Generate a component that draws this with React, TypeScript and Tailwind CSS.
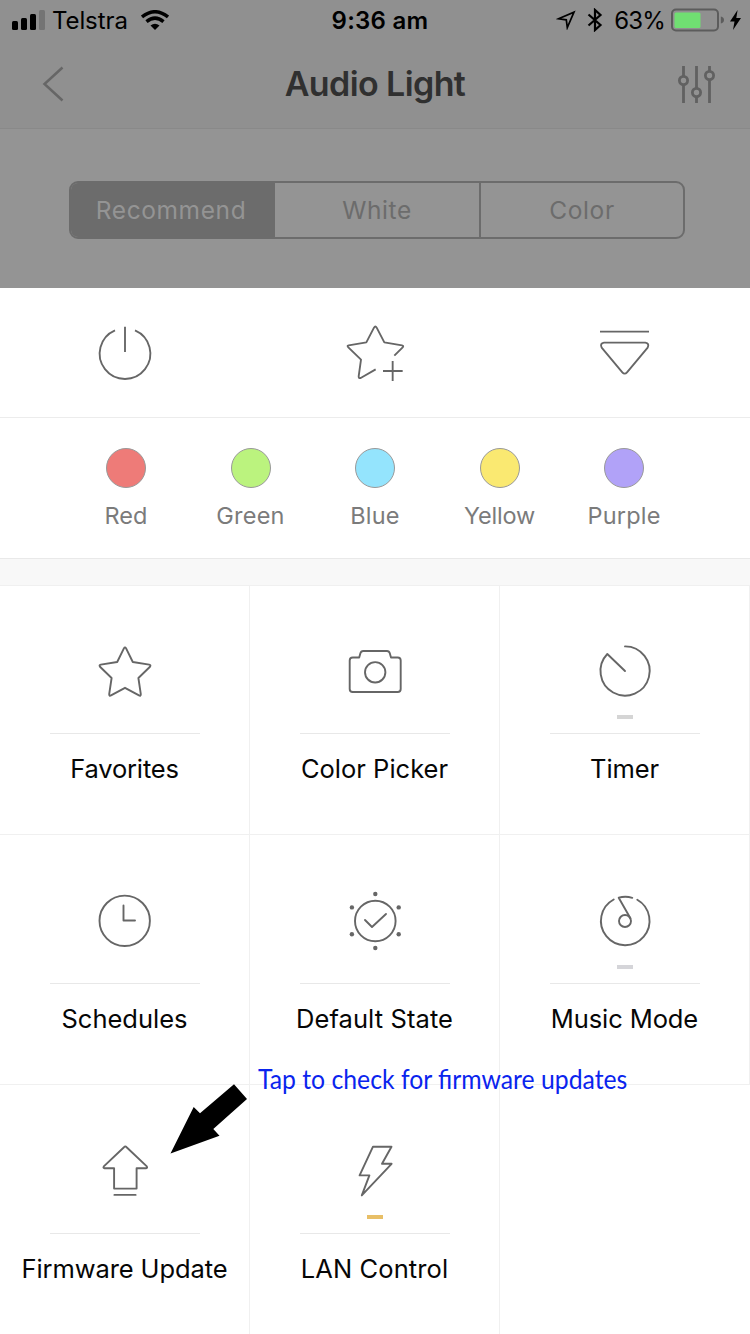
import type { ReactNode } from "react";

const colors = [
  { name: "Red", swatch: "bg-[#ee7b78]", text: "tracking-[0.1px]" },
  { name: "Green", swatch: "bg-[#bbf37e]", text: "tracking-[0.2px]" },
  { name: "Blue", swatch: "bg-[#94e4fd]", text: "tracking-[0.2px]" },
  { name: "Yellow", swatch: "bg-[#fae971]", text: "tracking-[-0.2px]" },
  { name: "Purple", swatch: "bg-[#b1a2f8]", text: "tracking-[0.2px]" },
];

function Glyph({ children }: { children: ReactNode }) {
  return (
    <svg className="h-16 w-16" viewBox="-32 -32 64 64" fill="none" stroke="#666" strokeWidth="1.9" strokeLinecap="round" strokeLinejoin="round">
      {children}
    </svg>
  );
}

function BigGlyph({ children }: { children: ReactNode }) {
  return (
    <div className="flex justify-center">
      <svg className="h-[90px] w-[100px]" viewBox="-15 0 300 270" fill="none" stroke="#666" strokeWidth="5.6" strokeLinejoin="round">
        {children}
      </svg>
    </div>
  );
}

const tiles: { label: string; badge?: string; text: string; icon: ReactNode }[] = [
  {
    label: "Favorites",
    text: "tracking-[-0.15px]",
    icon: <path d="M-1.1-23.6Q0-25.6 1.1-23.6L7.8-10 24.2-7.4Q26.2-7 25-5.3L13.4 6 15.8 22.2Q15.8 24.4 14 23.4L0 15.8-14 23.4Q-15.8 24.4-15.8 22.2L-13.4 6-25-5.3Q-26.2-7-24.2-7.4L-7.8-10Z" />,
  },
  {
    label: "Color Picker",
    text: "tracking-[0px]",
    icon: (
      <>
        <path d="M-15.8-14.5L-14.6-18.8Q-14-21-11.8-21H12Q14.2-21 14.8-18.8L16-14.5H22.7Q25.7-14.5 25.7-11.5V17Q25.7 20 22.7 20H-22.3Q-25.3 20-25.3 17V-11.5Q-25.3-14.5-22.3-14.5Z" />
        <circle cx=".2" cy=".3" r="10.2" />
      </>
    ),
  },
  {
    label: "Timer",
    text: "tracking-[-0.1px]",
    badge: "bg-[#d5d5d5]",
    icon: <path d="M0-25.6A24.6 24.6 0 1 1-17.7-18L0-1" />,
  },
  {
    label: "Schedules",
    text: "tracking-[0px]",
    icon: (
      <>
        <circle cx="-.3" cy="-1.2" r="25.2" />
        <path d="M-1.5-16.5V-1.5H10" />
      </>
    ),
  },
  {
    label: "Default State",
    text: "tracking-[0.1px]",
    icon: (
      <>
        <circle cx=".3" cy="-1" r="20.3" />
        <path d="M-10-2L-3 5 11-8" />
        <g fill="#666" stroke="none">
          <circle cx=".3" cy="-28" r="2.2" />
          <circle cx="-23.1" cy="-14.6" r="2.2" />
          <circle cx="23.7" cy="-14.6" r="2.2" />
          <circle cx="-23.1" cy="12.3" r="2.2" />
          <circle cx="23.7" cy="12.3" r="2.2" />
          <circle cx=".3" cy="26" r="2.2" />
        </g>
      </>
    ),
  },
  {
    label: "Music Mode",
    text: "tracking-[-0.1px]",
    badge: "bg-[#d5d5d9]",
    icon: (
      <>
        <path d="M12.3-22.2A24.3 24.3 0 1 1-11.3-22.5" />
        <path d="M7.3-24.2Q.5-26.2-6.3-24.3L5.4-3.8" />
        <circle cx="0" cy="-1" r="6" />
      </>
    ),
  },
  {
    label: "Firmware Update",
    text: "tracking-[-0.1px]",
    icon: (
      <>
        <path d="M-1-24.8Q.3-26.2 1.6-24.8L21.8-5.6Q22.8-4 21-3.7H11.6V16.6H-10.9V-3.7H-20.4Q-22.2-4-21.2-5.6Z" />
        <path d="M-10.6 22.9H10.6" />
      </>
    ),
  },
  {
    label: "LAN Control",
    text: "tracking-[0.1px]",
    badge: "bg-[#e8bf67]",
    icon: <path d="M-2-25.3H16.5L7-8.2H16.6L-13.2 23.4-5.6 3.4H-15.4Z" />,
  },
];

function Tile({ tile }: { tile: (typeof tiles)[number] }) {
  return (
    <div className="flex h-[250px] flex-col items-center border-r border-b border-[#f0f0f0] pt-[55px]">
      <Glyph>{tile.icon}</Glyph>
      <div className="mt-[11px] h-1 w-4">{tile.badge && <div className={`h-1 w-4 ${tile.badge}`} />}</div>
      <div className="mt-[14px] h-px w-[150px] bg-[#e8e8e8]" />
      <div className={`mt-[17px] text-[25.5px] leading-9 whitespace-nowrap text-[#060606] ${tile.text}`}>{tile.label}</div>
    </div>
  );
}

function StatusBar() {
  return (
    <div className="flex h-10 items-center text-black">
      <div className="flex flex-1 items-center pl-3">
        <svg className="h-5 w-[34px]" viewBox="0 0 34 20">
          <rect x="0" y="11" width="6" height="9" rx="1.5" />
          <rect x="9" y="8" width="6" height="12" rx="1.5" />
          <rect x="18" y="4" width="6" height="16" rx="1.5" />
          <rect x="27" y="0" width="6" height="20" rx="1.5" fill="#747474" />
        </svg>
        <span className="ml-[6px] pt-0.5 text-[24px] leading-10 tracking-[-0.1px]">Telstra</span>
        <svg className="ml-[13px] h-5 w-7" viewBox="0 0 28 20">
          <g fill="none" stroke="#000" strokeWidth="3.5">
            <path d="M1 7Q14-3.5 27 7" />
            <path d="M5.5 11.6Q14 4.7 22.5 11.6" />
          </g>
          <path d="M9.5 15.4Q14 12 18.5 15.4L14 20Z" />
        </svg>
      </div>
      <span className="pt-0.5 pl-[7px] text-[24px] leading-10 font-semibold tracking-[0.25px]">9:36 am</span>
      <div className="flex flex-1 items-center justify-end pr-[9px]">
        <svg className="h-5 w-5" viewBox="0 0 20 20">
          <path d="M2.5 8.8L18 2.2 11.3 17.6 10.3 9.8Z" fill="none" stroke="#000" strokeWidth="1.7" />
        </svg>
        <svg className="ml-[11px] h-6 w-4" viewBox="0 0 16 24">
          <path d="M1.5 6.5L13.5 17 8 22V2L13.5 7 1.5 17.5" fill="none" stroke="#000" strokeWidth="2.2" />
        </svg>
        <span className="ml-[11px] pt-0.5 text-[24px] leading-10 tracking-[-0.8px]">63%</span>
        <svg className="ml-[6px] h-6 w-[54px]" viewBox="0 0 54 24">
          <rect x="1" y="1.5" width="46" height="21" rx="4" fill="none" stroke="#5c5c5c" strokeWidth="2" />
          <rect x="3.5" y="4.5" width="26" height="15.5" rx="1.5" fill="#70df72" />
          <path d="M49.8 8.5Q53 9.3 53 12T49.8 15.5Z" fill="#5c5c5c" />
        </svg>
        <svg className="ml-[5px] h-5 w-[11px]" viewBox="0 0 11 20">
          <path d="M7.6 0L0 11.4H4.5L3 20 11 8H6.3Z" />
        </svg>
      </div>
    </div>
  );
}

export default function App() {
  return (
    <div className="relative h-[1334px] w-[750px] overflow-hidden bg-white font-[Inter,sans-serif]">
      <header className="h-[129px] border-b border-[#898989] bg-[#909090]">
        <StatusBar />
        <div className="flex h-[88px] items-center justify-between pr-[34px] pl-[42px]">
          <svg className="h-9 w-8" viewBox="0 0 32 36">
            <path d="M20.5 1.5L2.5 18 20.5 34.5" fill="none" stroke="#666" strokeWidth="2.5" />
          </svg>
          <h1 className="text-[34px] leading-[44px] font-semibold tracking-[-0.6px] text-[#303030]">Audio Light</h1>
          <svg className="h-[38px] w-10" viewBox="0 0 40 38" fill="#929292" stroke="#616161" strokeWidth="2.8">
            <path d="M7.5 1V38M20.5 1V38M33.5 1V38" />
            <circle cx="7.5" cy="15.5" r="4.1" />
            <circle cx="20.5" cy="27.5" r="4.1" />
            <circle cx="33.5" cy="10.5" r="4.1" />
          </svg>
        </div>
      </header>
      <div className="flex h-[159px] justify-center bg-[#949494] pt-[52px]">
        <div className="ml-1 grid h-[58px] w-[616px] grid-cols-[204px_206px_202px] overflow-hidden rounded-[9px] border-2 border-[#6c6c6c] bg-[#949494] text-center text-[24.5px] leading-[54px] tracking-[0.6px] text-[#6c6c6c]">
          <div className="bg-[#6c6c6c] pr-1 text-[#949494]">Recommend</div>
          <div className="border-r-2 border-[#6c6c6c]">White</div>
          <div>Color</div>
        </div>
      </div>
      <div className="grid h-[130px] grid-cols-3 border-b border-[#ececec] pt-[22px]">
        <BigGlyph>
          <path d="M165 61A76 76 0 1 1 105 61M135 50V126" />
        </BigGlyph>
        <BigGlyph>
          <path d="M193 137L218 112Q222 107 216 106L163 97 140 53Q136 46 132 53L109 97 56 106Q50 107 55 112L93 149 86 199Q86 206 92 204L137 178M188 153V213M159 183H218" />
        </BigGlyph>
        <BigGlyph>
          <path d="M60 65H207M72 98H196Q209 100 203 113L141 187Q134 195 127 187L65 113Q59 100 72 98Z" />
        </BigGlyph>
      </div>
      <div className="flex h-[141px] justify-center border-b border-[#e9e9e9] pt-[30px]">
        {colors.map((c) => (
          <div key={c.name} className="flex w-[124.5px] flex-col items-center">
            <div className={`h-10 w-10 rounded-full border border-[#999] ${c.swatch}`} />
            <div className={`mt-3 text-[23.5px] leading-8 text-[#7b7b7b] ${c.text}`}>{c.name}</div>
          </div>
        ))}
      </div>
      <div className="h-[27px] border-b border-[#f0f0f0] bg-[#f8f8f8]" />
      <div className="-mt-px grid grid-cols-3">
        {tiles.map((t) => (
          <Tile key={t.label} tile={t} />
        ))}
      </div>
      <svg className="absolute top-[1084px] left-[170px] h-[70px] w-[78px]" viewBox="170 1084 78 70">
        <path d="M170.5 1153.5L193.7 1107 200 1113.3 234 1084.3 247 1099 213.3 1129 219.5 1135.7Z" />
      </svg>
      <div className="absolute top-[1063px] left-[258px] origin-left scale-x-[0.952] font-[Lato,sans-serif] text-[26px] leading-8 whitespace-nowrap text-[#0a24ee]">
        Tap to check for firmware updates
      </div>
    </div>
  );
}
